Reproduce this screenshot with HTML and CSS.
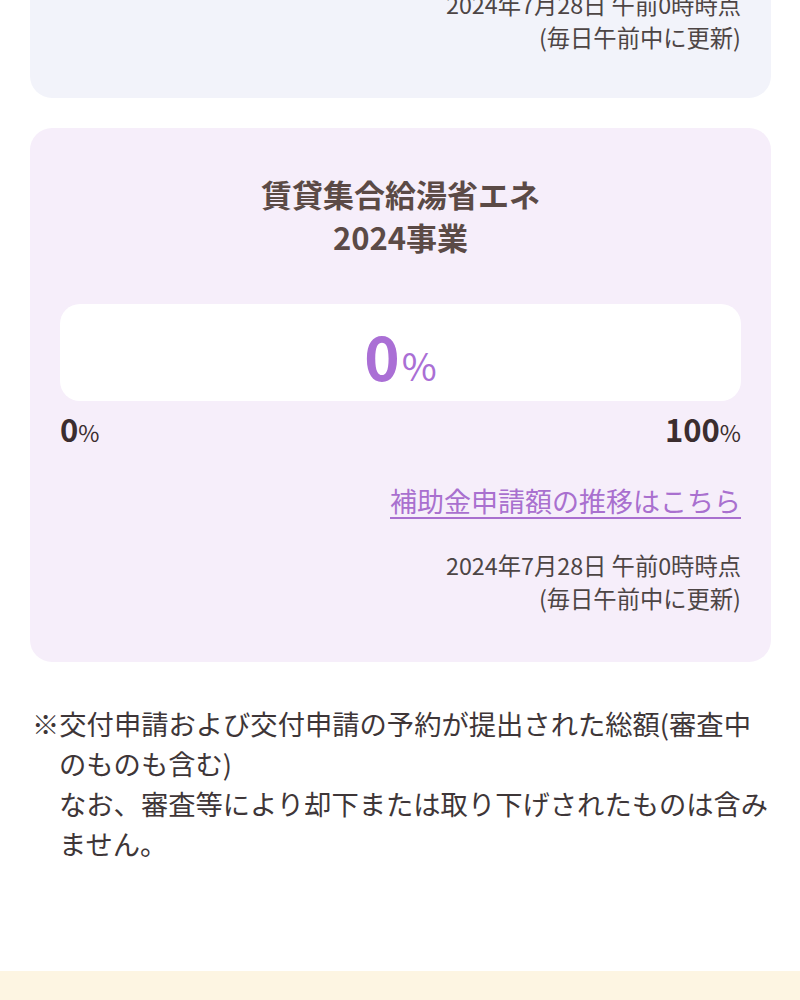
FILE: index.html
```html
<!DOCTYPE html>
<html lang="ja">
<head>
<meta charset="utf-8">
<title>補助金申請状況</title>
<link rel="stylesheet" href="styles.css">
</head>
<body>
<main class="page">
  <section class="card card-blue">
    <p class="stamp">2024年7月28日 午前0時時点<br>(毎日午前中に更新)</p>
  </section>

  <section class="card card-purple">
    <h2 class="card-title">賃貸集合給湯省エネ<br>2024事業</h2>
    <div class="meter">
      <span class="meter-value">0</span><span class="meter-unit">%</span>
    </div>
    <div class="scale">
      <span class="scale-item">0<small>%</small></span>
      <span class="scale-item">100<small>%</small></span>
    </div>
    <p class="more"><a href="#" class="more-link">補助金申請額の推移はこちら</a></p>
    <p class="stamp">2024年7月28日 午前0時時点<br>(毎日午前中に更新)</p>
  </section>

  <p class="note">※交付申請および交付申請の予約が提出された総額(審査中のものも含む)<br>なお、審査等により却下または取り下げされたものは含みません。</p>
</main>
<footer class="band"></footer>
</body>
</html>
```

FILE: styles.css
```css
html, body {
  margin: 0;
  padding: 0;
  background: #ffffff;
}

body {
  font-family: "Noto Sans CJK JP", "Noto Sans", sans-serif;
  color: #4b4244;
}

.page {
  margin-top: -52px;
  padding: 0 29px 0 30px;
  display: flex;
  flex-direction: column;
  gap: 30px;
}

.card {
  border-radius: 22px;
  padding: 40px 30px 44px;
}

.card-blue {
  background: #f2f3fa;
}

.card-purple {
  background: #f6eefa;
  padding-top: 44px;
  padding-bottom: 47px;
}

.card-title {
  margin: 0;
  text-align: center;
  font-size: 31px;
  line-height: 43px;
  font-weight: 700;
  color: #5b4a46;
}

.meter {
  margin-top: 46px;
  height: 97px;
  background: #ffffff;
  border-radius: 20px;
  display: flex;
  justify-content: center;
  align-items: baseline;
  padding-top: 2px;
  box-sizing: border-box;
  line-height: 97px;
  color: #aa6fd5;
}

.meter-value {
  font-size: 60px;
  font-weight: 700;
}

.meter-unit {
  font-size: 38px;
  font-weight: 400;
  margin-left: 2px;
}

.scale {
  margin-top: 10px;
  display: flex;
  justify-content: space-between;
  line-height: 36px;
}

.scale-item {
  font-size: 31px;
  font-weight: 700;
  color: #3b2d2f;
}

.scale-item small {
  font-size: 23px;
  font-weight: 400;
}

.more {
  margin: 31px 0 0;
  text-align: right;
  line-height: 40px;
}

.more-link {
  font-size: 27px;
  color: #a970cf;
  text-decoration: underline;
  text-underline-offset: 5px;
  text-decoration-thickness: 2px;
}

.stamp {
  margin: 24px 0 0;
  text-align: right;
  font-size: 23.3px;
  line-height: 33px;
  color: #4d4545;
}

.card-blue .stamp {
  margin-top: 0;
}

.note {
  margin: 11px 0 0;
  padding-left: 29px;
  text-indent: -27px;
  font-size: 27.3px;
  line-height: 40px;
  color: #3e3638;
}

.band {
  margin-top: 108px;
  height: 80px;
  background: #fdf5e2;
}
```
